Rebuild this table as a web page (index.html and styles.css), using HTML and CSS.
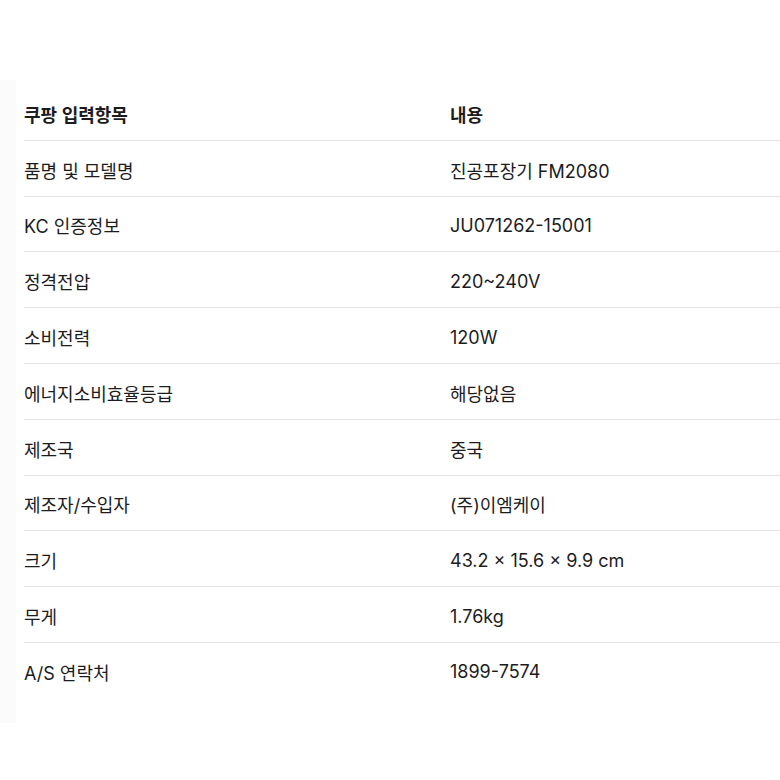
FILE: index.html
```html
<!DOCTYPE html>
<html lang="ko">
<head>
<meta charset="utf-8">
<link rel="stylesheet" href="styles.css">
</head>
<body>
<div class="page">
  <div class="strip"></div>
  <div class="table">
    <div class="row head"><div class="c1">쿠팡 입력항목</div><div class="c2">내용</div></div>
    <div class="row"><div class="c1">품명 및 모델명</div><div class="c2">진공포장기 FM2080</div></div>
    <div class="row"><div class="c1">KC 인증정보</div><div class="c2">JU071262-15001</div></div>
    <div class="row"><div class="c1">정격전압</div><div class="c2">220~240V</div></div>
    <div class="row"><div class="c1">소비전력</div><div class="c2">120W</div></div>
    <div class="row"><div class="c1">에너지소비효율등급</div><div class="c2">해당없음</div></div>
    <div class="row"><div class="c1">제조국</div><div class="c2">중국</div></div>
    <div class="row"><div class="c1">제조자/수입자</div><div class="c2">(주)이엠케이</div></div>
    <div class="row"><div class="c1">크기</div><div class="c2">43.2 × 15.6 × 9.9 cm</div></div>
    <div class="row"><div class="c1">무게</div><div class="c2">1.76kg</div></div>
    <div class="row last"><div class="c1">A/S 연락처</div><div class="c2">1899-7574</div></div>
  </div>
</div>
</body>
</html>
```
FILE: styles.css
```css
html, body {
  margin: 0;
  padding: 0;
  background: #ffffff;
}
body {
  width: 780px;
  height: 780px;
  overflow: hidden;
  font-family: Inter, "Noto Sans CJK KR", sans-serif;
  color: #1c1c1e;
}
.page {
  display: flex;
  padding-top: 80px;
}
.strip {
  width: 16px;
  height: 643px;
  background: #fbfbfb;
  flex: none;
}
.table {
  flex: 1;
  margin-left: 8px;
  margin-top: 5px;
}
.row {
  display: grid;
  grid-template-columns: 426px 1fr;
  align-items: center;
  box-sizing: content-box;
  height: 51.8px;
  padding-top: 3px;
  border-bottom: 1px solid #e4e4e4;
  font-size: 18px;
}
.row.last {
  border-bottom: none;
}
.head {
  font-weight: 600;
}
```
